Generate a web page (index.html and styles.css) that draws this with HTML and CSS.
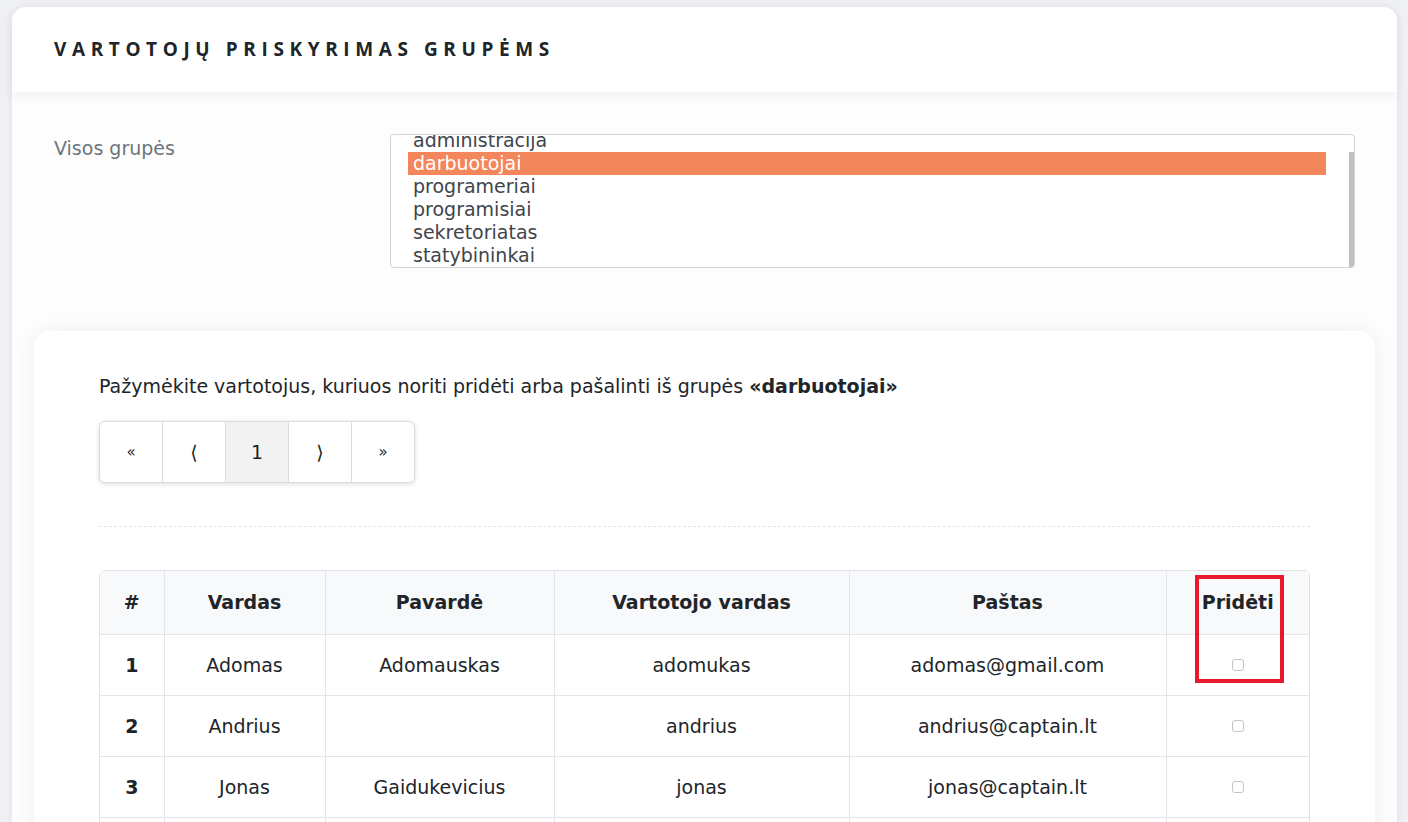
FILE: index.html
```html
<!DOCTYPE html>
<html lang="lt">
<head>
<meta charset="utf-8">
<title>Vartotojų priskyrimas grupėms</title>
<link rel="stylesheet" href="styles.css">
</head>
<body>
<div class="panel">
  <header class="panel-head">
    <h1 class="title">Vartotojų priskyrimas grupėms</h1>
  </header>
  <div class="panel-body">
    <div class="form-row">
      <label class="form-label">Visos grupės</label>
      <div class="listbox">
        <ul class="options">
          <li class="opt">administracija</li>
          <li class="opt selected">darbuotojai</li>
          <li class="opt">programeriai</li>
          <li class="opt">programisiai</li>
          <li class="opt">sekretoriatas</li>
          <li class="opt">statybininkai</li>
        </ul>
        <div class="scrolltrack"><div class="scrollthumb"></div></div>
      </div>
    </div>

    <section class="card">
      <p class="intro">Pažymėkite vartotojus, kuriuos noriti pridėti arba pašalinti iš grupės <strong>«darbuotojai»</strong></p>
      <nav class="pager">
        <span class="page small">«</span>
        <span class="page">⟨</span>
        <span class="page active">1</span>
        <span class="page">⟩</span>
        <span class="page small">»</span>
      </nav>
      <hr class="divider">
      <div class="table-wrap">
        <table class="users">
          <colgroup>
            <col class="c-num"><col class="c-name"><col class="c-surname"><col class="c-user"><col class="c-mail"><col class="c-add">
          </colgroup>
          <thead>
            <tr><th>#</th><th>Vardas</th><th>Pavardė</th><th>Vartotojo vardas</th><th>Paštas</th><th>Pridėti</th></tr>
          </thead>
          <tbody>
            <tr><th>1</th><td>Adomas</td><td>Adomauskas</td><td>adomukas</td><td>adomas@gmail.com</td><td><span class="check"></span></td></tr>
            <tr><th>2</th><td>Andrius</td><td></td><td>andrius</td><td>andrius@captain.lt</td><td><span class="check"></span></td></tr>
            <tr><th>3</th><td>Jonas</td><td>Gaidukevicius</td><td>jonas</td><td>jonas@captain.lt</td><td><span class="check"></span></td></tr>
            <tr class="blank"><th></th><td></td><td></td><td></td><td></td><td></td></tr>
          </tbody>
        </table>
        <div class="highlight"></div>
      </div>
    </section>
  </div>
</div>
</body>
</html>
```

FILE: styles.css
```css
* { box-sizing: border-box; }
html, body { height: 100%; }
body {
  margin: 0;
  padding: 7px 11px 0 12px;
  background: #eef0f3;
  font-family: "DejaVu Sans", "Noto Sans", sans-serif;
  font-size: 19px;
  line-height: 23px;
  color: #212529;
  overflow: hidden;
}
.panel {
  background: #fdfdfd;
  border-radius: 14px 14px 0 0;
  box-shadow: 0 0 8px rgba(0,0,0,0.06);
  min-height: 900px;
}
.panel-head {
  height: 85px;
  background: #fff;
  border-radius: 14px 14px 0 0;
  display: flex;
  align-items: center;
  padding: 0 42px;
  box-shadow: 0 4px 12px rgba(0,0,0,0.05);
  position: relative;
}
.title {
  margin: 0;
  font-family: "Open Sans", "DejaVu Sans", sans-serif;
  font-weight: 700;
  font-size: 19px;
  letter-spacing: 5.6px;
  text-transform: uppercase;
  color: #212529;
}
.panel-body {
  padding: 42px 22px 0;
}
.form-row {
  display: flex;
  padding: 0 20px;
}
.form-label {
  width: 336px;
  flex: none;
  color: #6c757d;
  padding-top: 3px;
}
.listbox {
  flex: 1;
  height: 134px;
  border: 1px solid #ced4da;
  border-radius: 4px;
  background: #fff;
  display: flex;
  overflow: hidden;
  padding-left: 17px;
}
.options {
  list-style: none;
  margin: -6px 23px 0 0;
  padding: 0;
  flex: 1;
}
.opt {
  height: 23px;
  padding-left: 5px;
  color: #40454b;
  white-space: nowrap;
}
.opt.selected {
  background: #f3865b;
  color: #fff;
}
.scrolltrack {
  width: 5px;
  flex: none;
  padding-top: 17px;
}
.scrollthumb {
  height: 100%;
  background: #c1c1c1;
}
.card {
  margin-top: 63px;
  background: #fff;
  border-radius: 16px 16px 0 0;
  box-shadow: 0 0 22px rgba(0,0,0,0.06);
  padding: 44px 65px 40px;
  min-height: 600px;
}
.intro {
  margin: 0;
}
.intro strong { font-weight: 700; }
.pager {
  margin-top: 23px;
  display: inline-flex;
  border: 1px solid #dcdcdc;
  border-radius: 6px;
  box-shadow: 0 1px 5px rgba(0,0,0,0.14);
  overflow: hidden;
  background: #fff;
}
.page {
  width: 63px;
  height: 60px;
  display: flex;
  align-items: center;
  justify-content: center;
  border-left: 1px solid #dcdcdc;
  font-size: 19px;
  color: #222;
}
.page:first-child { border-left: 0; width: 62px; }
.page.small { font-size: 15px; }
.page.active { background: #f2f2f2; }
.divider {
  margin: 43px 0 0;
  border: 0;
  border-top: 1px dashed #e6e6e6;
  height: 0;
}
.table-wrap {
  margin-top: 43px;
  position: relative;
  border: 1px solid #dee2e6;
  border-radius: 6px 6px 0 0;
}
.users {
  width: 100%;
  border-collapse: collapse;
  table-layout: fixed;
}
.c-num { width: 64px; }
.c-name { width: 161px; }
.c-surname { width: 229px; }
.c-user { width: 295px; }
.c-mail { width: 317px; }
.c-add { width: auto; }
.users th, .users td {
  text-align: center;
  border-right: 1px solid #e3e5e8;
  border-bottom: 1px solid #e3e5e8;
  padding: 19px 4px 18px;
  white-space: nowrap;
}
.users th:last-child, .users td:last-child { border-right: 0; }
.users thead th {
  background: #f8f9fa;
  padding: 20px 4px;
  font-weight: 700;
}
.users tbody th { font-weight: 700; }
.users .blank th, .users .blank td { height: 61px; }
.check {
  display: inline-block;
  width: 12px;
  height: 12px;
  border: 1px solid #c4c4c4;
  border-radius: 3px;
  background: #fff;
  vertical-align: middle;
  position: relative;
  top: -2px;
}
.highlight {
  position: absolute;
  left: 1095px;
  top: 4px;
  width: 89px;
  height: 108px;
  border: 4px solid #e8192c;
  pointer-events: none;
}
```
